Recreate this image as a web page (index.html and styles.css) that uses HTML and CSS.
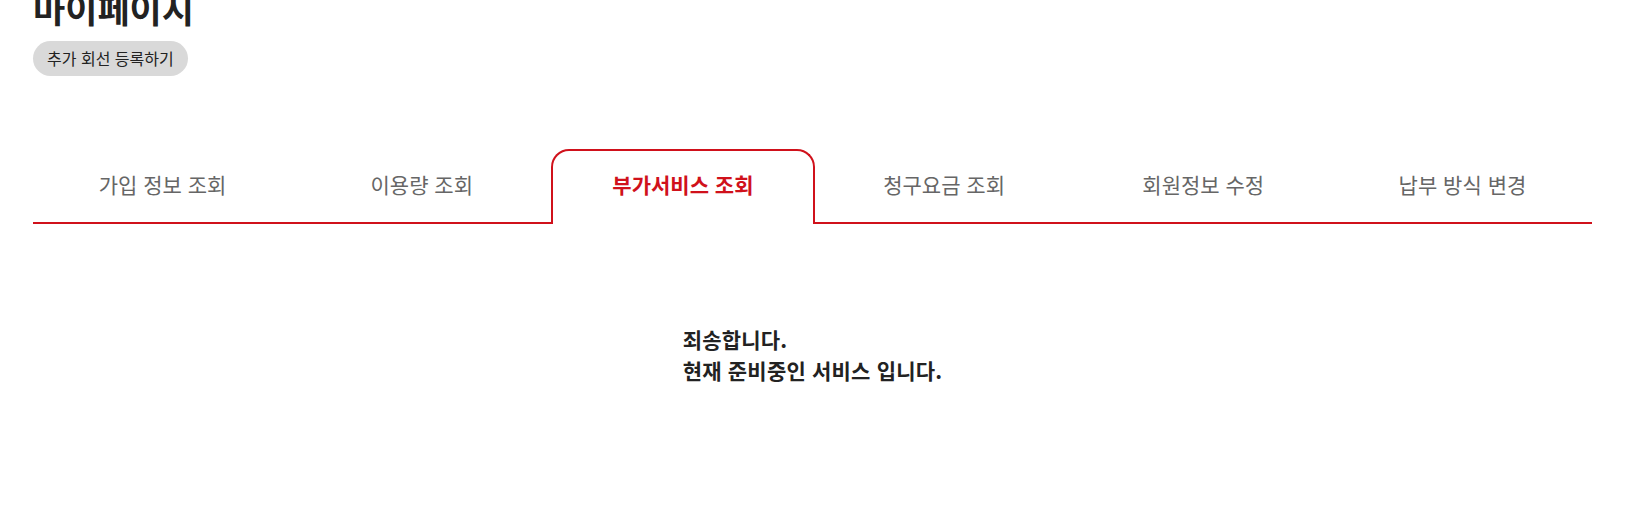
FILE: index.html
```html
<!DOCTYPE html>
<html lang="ko">
<head>
  <meta charset="UTF-8">
  <title>마이페이지</title>
  <link rel="stylesheet" href="styles.css">
</head>
<body>
  <div class="mypage">
    <h1 class="page-title">마이페이지</h1>
    <button class="add-line">추가 회선 등록하기</button>

    <ul class="tabs">
      <li class="tab">가입 정보 조회</li>
      <li class="tab">이용량 조회</li>
      <li class="tab active">부가서비스 조회</li>
      <li class="tab">청구요금 조회</li>
      <li class="tab">회원정보 수정</li>
      <li class="tab">납부 방식 변경</li>
    </ul>

    <div class="tab-body">
      <p class="notice">죄송합니다.<br>현재 준비중인 서비스 입니다.</p>
    </div>
  </div>
</body>
</html>
```

FILE: styles.css
```css
body {
  margin: 0;
  background: #fff;
  color: #222;
  font-family: "Noto Sans CJK KR", "Noto Sans", sans-serif;
}
.mypage {
  padding: 0 39px 0 33px;
}
.page-title {
  margin: -12px 0 0;
  font-size: 35px;
  line-height: 40px;
  font-weight: 700;
}
.add-line {
  display: block;
  margin-top: 13px;
  height: 35px;
  padding: 0 14px;
  border: 0;
  border-radius: 18px;
  background: #d9d9d9;
  color: #222;
  font-family: inherit;
  font-size: 16px;
  line-height: 35px;
}

/* tab bar */
.tabs {
  display: flex;
  margin: 73px 0 0;
  padding: 0;
  list-style: none;
}
.tab {
  flex: 1;
  box-sizing: border-box;
  height: 75px;
  padding-top: 20px;
  border-bottom: 2px solid #d0111b;
  color: #666;
  font-size: 21px;
  line-height: 30px;
  text-align: center;
}
.tab.active {
  padding-top: 18px;
  border: 2px solid #d0111b;
  border-bottom: 0;
  border-radius: 18px 18px 0 0;
  color: #d0111b;
  font-weight: 700;
}

.tab-body {
  padding-top: 100px;
  text-align: center;
}
.notice {
  display: inline-block;
  margin: 0;
  text-align: left;
  font-size: 21px;
  line-height: 31px;
  font-weight: 700;
  letter-spacing: 0.2px;
}
```
